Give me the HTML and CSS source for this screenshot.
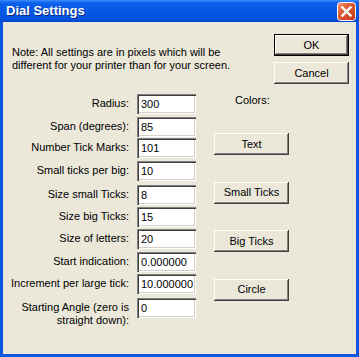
FILE: index.html
```html
<!DOCTYPE html>
<html>
<head>
<meta charset="utf-8">
<title>Dial Settings</title>
<link rel="stylesheet" href="styles.css">
</head>
<body>
<div class="window">
  <div class="titlebar">
    <span class="title">Dial Settings</span>
    <svg class="close" width="19" height="19" viewBox="0 0 19 19">
      <defs>
        <linearGradient id="cg" x1="0" y1="0" x2="1" y2="1">
          <stop offset="0" stop-color="#f19a7c"/>
          <stop offset="0.35" stop-color="#e2613c"/>
          <stop offset="1" stop-color="#c23413"/>
        </linearGradient>
      </defs>
      <rect x="0.5" y="0.5" width="18" height="18" rx="3" fill="url(#cg)" stroke="#ffffff"/>
      <path d="M5.5 5.5 L13.5 13.5 M13.5 5.5 L5.5 13.5" stroke="#ffffff" stroke-width="2.4" stroke-linecap="square"/>
    </svg>
  </div>
  <div class="client">
    <div class="top">
      <p class="note">Note: All settings are in pixels which will be<br>different for your printer than for your screen.</p>
      <div class="actions">
        <button class="btn default">OK</button>
        <button class="btn">Cancel</button>
      </div>
    </div>
    <div class="body">
      <div class="form">
        <label class="lbl">Radius:</label><input class="field" type="text" value="300">
        <label class="lbl">Span (degrees):</label><input class="field" type="text" value="85">
        <label class="lbl">Number Tick Marks:</label><input class="field" type="text" value="101">
        <label class="lbl">Small ticks per big:</label><input class="field" type="text" value="10">
        <label class="lbl">Size small Ticks:</label><input class="field" type="text" value="8">
        <label class="lbl">Size big Ticks:</label><input class="field" type="text" value="15">
        <label class="lbl">Size of letters:</label><input class="field" type="text" value="20">
        <label class="lbl">Start indication:</label><input class="field" type="text" value="0.000000">
        <label class="lbl">Increment per large tick:</label><input class="field" type="text" value="10.000000">
        <label class="lbl">Starting Angle (zero is<br>straight down):</label><input class="field" type="text" value="0">
      </div>
      <div class="colors">
        <span class="colors-label">Colors:</span>
        <button class="btn">Text</button>
        <button class="btn">Small Ticks</button>
        <button class="btn">Big Ticks</button>
        <button class="btn">Circle</button>
      </div>
    </div>
  </div>
</div>
</body>
</html>
```
FILE: styles.css
```css
* {
  box-sizing: border-box;
}

html, body {
  margin: 0;
  padding: 0;
}

body {
  width: 359px;
  height: 357px;
  overflow: hidden;
  font-family: "Liberation Sans", Arial, sans-serif;
  font-size: 11px;
  line-height: 13px;
  color: #000;
  background: #ece9d8;
}

.window {
  width: 359px;
  height: 357px;
  display: flex;
  flex-direction: column;
}

.titlebar {
  flex: none;
  height: 22px;
  display: flex;
  align-items: center;
  justify-content: space-between;
  padding: 0 3px 0 6px;
  background: linear-gradient(#3c8dfb 0, #0b60ea 3px, #0757e5 12px, #0452de 19px, #0346cc 22px);
}

.title {
  font: bold 13px/22px "Liberation Sans", Arial, sans-serif;
  color: #fff;
  text-shadow: 1px 1px 0 #0a2a8a;
}

.close {
  display: block;
  flex: none;
}

.client {
  flex: 1;
  border: 3px solid #0b56e0;
  border-top: 0;
  background: #ebe8da;
  padding: 12px 7px 0 5px;
}

.top {
  display: flex;
  justify-content: space-between;
  align-items: flex-start;
}

.note {
  margin: 12px 0 0 4px;
  white-space: nowrap;
}

.actions {
  display: flex;
  flex-direction: column;
  gap: 6px;
}

.btn {
  display: block;
  width: 75px;
  height: 22px;
  padding: 0;
  border: 0;
  font: 11px/13px "Liberation Sans", Arial, sans-serif;
  color: #000;
  background: #ebe8da;
  box-shadow: inset -1px -1px #404040, inset 1px 1px #ffffff, inset -2px -2px #808080;
  text-align: center;
}

.btn.default {
  border: 1px solid #000;
}

.body {
  display: flex;
  align-items: flex-start;
  margin-top: 10px;
}

.form {
  display: grid;
  grid-template-columns: 121px 59px;
  grid-template-rows: 23px 21px 23px 24px 22px 22px 23px 22px 24px auto;
  column-gap: 8px;
}

.lbl {
  padding-top: 3px;
  text-align: right;
  white-space: nowrap;
}

.field {
  display: block;
  width: 59px;
  height: 20px;
  margin: 0;
  padding: 2px 0 2px 4px;
  border: 0;
  font: 11px/13px "Liberation Sans", Arial, sans-serif;
  color: #000;
  background: #fff;
  box-shadow: inset 1px 1px #808080, inset 2px 2px #404040, inset -1px -1px #ffffff, inset -2px -2px #d4d0c8;
  outline: none;
}

.colors {
  display: flex;
  flex-direction: column;
  gap: 26.5px;
  margin-left: 18px;
  width: 75px;
}

.colors-label {
  padding-left: 21px;
  margin-bottom: -0.5px;
}
```
